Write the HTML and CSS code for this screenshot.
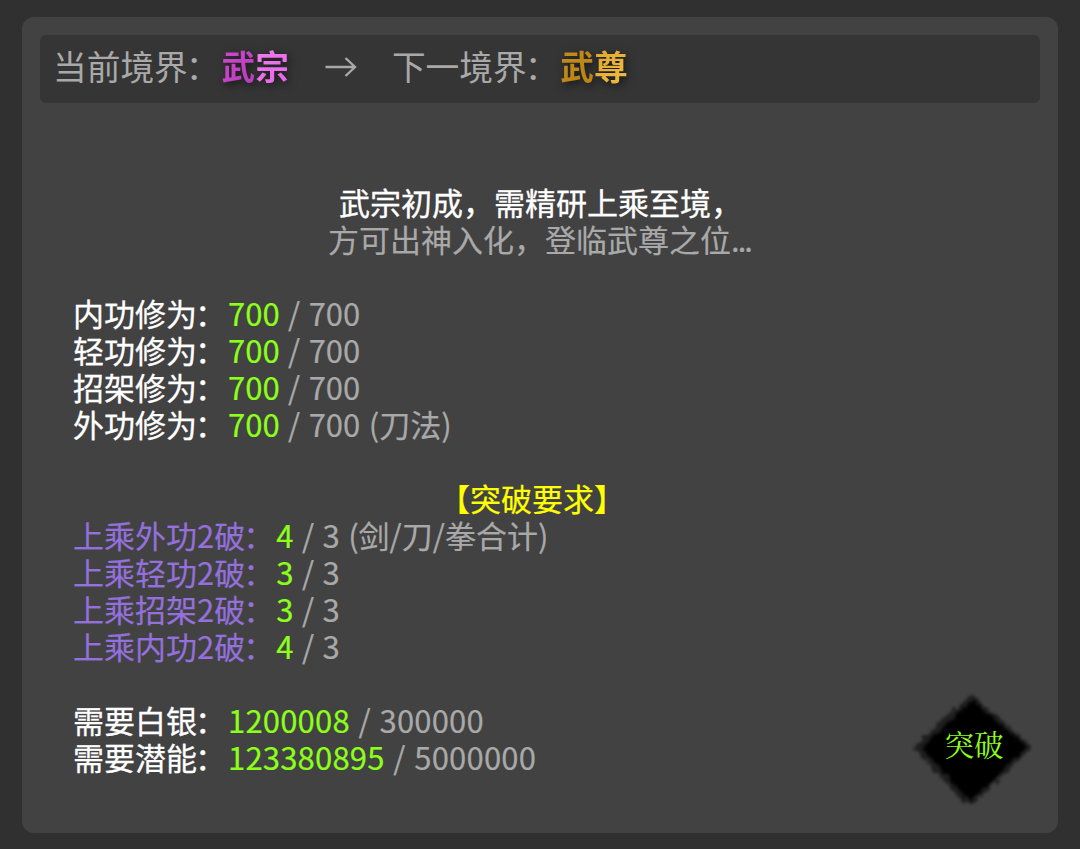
FILE: index.html
```html
<!DOCTYPE html>
<html lang="zh-CN">
<head>
<meta charset="utf-8">
<title>境界突破</title>
<link rel="stylesheet" href="styles.css">
</head>
<body>
<main class="panel">
  <header class="realm">
    <span>当前境界<span class="mark">：</span></span>
    <strong class="rank rank-now"><span>武</span><span>宗</span></strong>
    <svg class="arrow" width="32" height="22" viewBox="0 0 32 22"><path d="M.5 11H30M20.500 2l9.500 9-9.500 9"/></svg>
    <span>下一境界<span class="mark">：</span></span>
    <strong class="rank rank-next"><span>武</span><span>尊</span></strong>
  </header>
  <section class="details">
    <p class="line center white intro">武宗初成，需精研上乘至境，</p>
    <p class="line center">方可出神入化，登临武尊之位<span class="dots">...</span></p>
    <div class="group">
      <p class="line"><span class="white">内功修为<span class="mark">：</span></span><span class="ok">700</span> / 700</p>
      <p class="line"><span class="white">轻功修为<span class="mark">：</span></span><span class="ok">700</span> / 700</p>
      <p class="line"><span class="white">招架修为<span class="mark">：</span></span><span class="ok">700</span> / 700</p>
      <p class="line"><span class="white">外功修为<span class="mark">：</span></span><span class="ok">700</span> / 700 (刀法)</p>
    </div>
    <div class="group">
      <p class="line center heading">【突破要求】</p>
      <p class="line"><span class="purple">上乘外功2破<span class="mark">：</span></span><span class="ok">4</span> / 3 (剑/刀/拳合计)</p>
      <p class="line"><span class="purple">上乘轻功2破<span class="mark">：</span></span><span class="ok">3</span> / 3</p>
      <p class="line"><span class="purple">上乘招架2破<span class="mark">：</span></span><span class="ok">3</span> / 3</p>
      <p class="line"><span class="purple">上乘内功2破<span class="mark">：</span></span><span class="ok">4</span> / 3</p>
    </div>
    <div class="group">
      <p class="line"><span class="white">需要白银<span class="mark">：</span></span><span class="num"><span class="ok">1200008</span> / 300000</span></p>
      <p class="line"><span class="white">需要潜能<span class="mark">：</span></span><span class="num"><span class="ok">123380895</span> / 5000000</span></p>
    </div>
  </section>
  <button class="break">
    <svg class="ink" width="124" height="120" viewBox="0 0 124 120">
      <defs><filter id="rough" x="-10%" y="-10%" width="120%" height="120%">
        <feTurbulence type="fractalNoise" baseFrequency=".2" numOctaves="3" seed="9" result="n"/>
        <feDisplacementMap in="SourceGraphic" in2="n" scale="8" xChannelSelector="R" yChannelSelector="G"/>
        <feGaussianBlur stdDeviation="1.500"/>
      </filter></defs>
      <g filter="url(#rough)">
        <path d="M61 5 121 58 67 111 60 116 51 112 3 60 7 53Z" fill="#000" fill-opacity=".55"/>
        <path d="M61 11 115 58 65 107 59 111 54 107 13 60 15 55Z" fill="#020202"/>
      </g>
    </svg>
    <span class="break-label">突破</span>
  </button>
</main>
</body>
</html>
```
FILE: styles.css
```css
* { box-sizing: border-box; }
body {
  margin: 0;
  height: 849px;
  padding: 17px 22px 16px;
  background: #303030;
  font-family: "Noto Sans CJK SC", sans-serif;
  color: #a9a9a9;
}
.panel {
  position: relative;
  height: 816px;
  padding: 18px;
  border-radius: 12px;
  background: #424242;
}
.realm {
  display: flex;
  align-items: center;
  height: 68px;
  padding: 0 13px 6px;
  border-radius: 6px;
  background: #353535;
  font-size: 33.700px;
  line-height: 50px;
  white-space: nowrap;
}
.mark { margin: 0 2px 0 -2px; }
.rank { display: flex; font-weight: 700; filter: drop-shadow(2px 3px 4px rgba(0, 0, 0, .6)); }
.rank span { color: transparent; background-clip: text; -webkit-background-clip: text; }
.rank-now span { background-image: linear-gradient(135deg, #d04bd2, #b53bb8); }
.rank-now span + span { background-image: linear-gradient(135deg, #ee82ee, #e660e9); }
.rank-next span { background-image: linear-gradient(135deg, #c58d1c, #b98214); }
.rank-next span + span { background-image: linear-gradient(135deg, #e0a52d, #f0bd48); }
.arrow {
  margin: 2px 35px 0 36px;
  fill: none;
  stroke: #a9a9a9;
  stroke-width: 2.400;
}
.details {
  padding: 80px 34px 0 33px;
  font-size: 31px;
  word-spacing: 1.500px;
  -webkit-text-stroke: .2px currentColor;
}
.line { margin: 0; height: 37px; line-height: 37px; white-space: nowrap; }
.center { text-align: center; }
.intro { padding-left: 2px; }
.dots { letter-spacing: -2px; }
.group { margin-top: 37px; }
.num { letter-spacing: .200px; }
.white { color: #fff; -webkit-text-stroke: .3px #fff; }
.ok { color: #8cff1a; -webkit-text-stroke: .2px #8cff1a; }
.purple { color: #9370db; -webkit-text-stroke: .2px #9370db; }
.heading { padding-right: 15px; color: #ff0; -webkit-text-stroke: .2px #ff0; }
.break {
  position: absolute;
  right: 23px;
  bottom: 24px;
  display: grid;
  place-items: center;
  width: 124px;
  height: 120px;
  padding: 0;
  border: 0;
  background: none;
}
.ink, .break-label { grid-area: 1 / 1; }
.break-label {
  z-index: 1;
  padding: 0 0 12px 2px;
  color: #8cff1a;
  font: 29.500px/40px KaiTi, "Noto Serif CJK SC", "Noto Sans CJK SC", serif;
}
```
